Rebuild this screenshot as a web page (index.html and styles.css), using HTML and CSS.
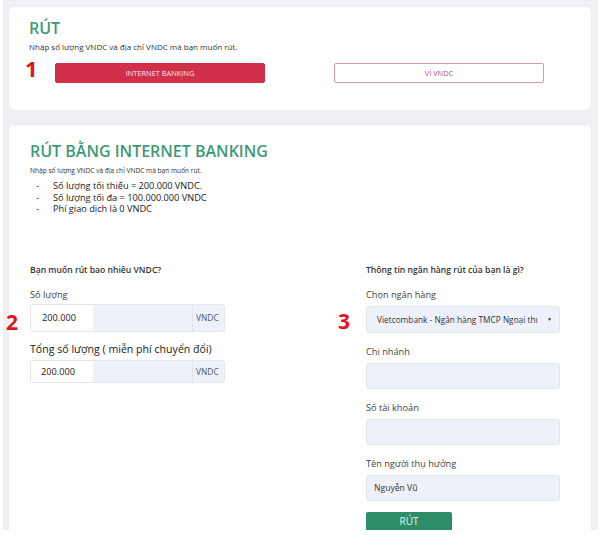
FILE: index.html
```html
<!DOCTYPE html>
<html lang="vi">
<head>
    <meta charset="UTF-8">
    <meta name="viewport" content="width=device-width, initial-scale=1.0">
    <title>Rút VNDC</title>
    <link rel="stylesheet" href="styles.css">
</head>
<body>
    <div class="page">
        <section class="card card-top">
            <h1 class="title">RÚT</h1>
            <p class="lead">Nhập số lượng VNDC và địa chỉ VNDC mà bạn muốn rút.</p>
            <div class="tabs">
                <button class="tab tab-active">INTERNET BANKING</button>
                <button class="tab">VÍ VNDC</button>
            </div>
        </section>

        <section class="card card-form">
            <h2 class="title">RÚT BẰNG INTERNET BANKING</h2>
            <p class="lead lead-small">Nhập số lượng VNDC và địa chỉ VNDC mà bạn muốn rút.</p>
            <ul class="rules">
                <li>Số lượng tối thiểu = 200.000 VNDC.</li>
                <li>Số lượng tối đa = 100.000.000 VNDC</li>
                <li>Phí giao dịch là 0 VNDC</li>
            </ul>

            <div class="columns">
                <div class="col">
                    <h3 class="col-title">Bạn muốn rút bao nhiêu VNDC?</h3>
                    <div class="field-label">Số lượng</div>
                    <div class="input-group">
                        <span class="input-value">200.000</span>
                        <span class="input-fill"></span>
                        <span class="addon">VNDC</span>
                    </div>
                    <div class="field-label field-label-big">Tổng số lượng ( miễn phí chuyển đổi)</div>
                    <div class="input-group input-group-small">
                        <span class="input-value">200.000</span>
                        <span class="input-fill"></span>
                        <span class="addon">VNDC</span>
                    </div>
                </div>

                <div class="col">
                    <h3 class="col-title">Thông tin ngân hàng rút của bạn là gì?</h3>
                    <div class="field-label">Chọn ngân hàng</div>
                    <div class="select">
                        <span>Vietcombank - Ngân hàng TMCP Ngoại thı</span>
                        <span class="caret">▼</span>
                    </div>
                    <div class="field-label">Chi nhánh</div>
                    <div class="text-input"></div>
                    <div class="field-label">Số tài khoản</div>
                    <div class="text-input"></div>
                    <div class="field-label">Tên người thụ hưởng</div>
                    <div class="text-input">Nguyễn Vũ</div>
                    <button class="submit">RÚT</button>
                </div>
            </div>
        </section>

        <span class="mark mark-1">1</span>
        <span class="mark mark-2">2</span>
        <span class="mark mark-3">3</span>
    </div>
</body>
</html>
```

FILE: styles.css
```css
body {
    margin: 0;
    background: #fff;
    font-family: "Open Sans", Arial, sans-serif;
    color: #333;
}
.page {
    position: relative;
    margin-left: 3px;
    width: 595px;
    height: 530px;
    overflow: hidden;
    background: #eff0f4;
    padding: 7px 0 0 6px;
    box-sizing: border-box;
}
.card {
    width: 582px;
    background: #fff;
    border-radius: 5px;
    box-shadow: 0 0 2px rgba(0, 0, 0, 0.06);
    box-sizing: border-box;
}
.card-top {
    height: 103px;
    padding: 13px 20px 0 20px;
}
.card-form {
    margin-top: 15px;
    height: 420px;
    padding: 18px 21px 0 21px;
}
.title {
    margin: 0;
    font-size: 16px;
    line-height: 16px;
    font-weight: 600;
    color: #3d9a77;
}
.lead {
    margin: 5px 0 0;
    font-size: 8px;
    line-height: 12px;
}
.lead-small {
    margin-top: 7px;
    font-size: 6.6px;
    line-height: 10px;
}
.tabs {
    display: flex;
    gap: 69px;
    margin: 10px 0 0 26px;
}
.tab {
    width: 210px;
    height: 20px;
    padding: 0;
    border: 1px solid #d99aab;
    border-radius: 2px;
    background: #fff;
    color: #b8557a;
    font-family: inherit;
    font-size: 7.4px;
}
.tab-active {
    background: #d03049;
    border-color: #d03049;
    color: #fbe3e8;
}
.rules {
    list-style: none;
    margin: 4px 0 0;
    padding: 0 0 0 6px;
    font-size: 9.2px;
    line-height: 11.6px;
    color: #222;
}
.rules li {
    display: flex;
}
.rules li::before {
    content: "-";
    width: 17px;
}
.columns {
    display: grid;
    grid-template-columns: 195px 194px;
    column-gap: 141px;
    margin-top: 49px;
}
.col-title {
    margin: 0;
    font-size: 8.6px;
    line-height: 12px;
    font-weight: 600;
    color: #333;
}
.field-label {
    margin-top: 13px;
    font-size: 9.2px;
    line-height: 12px;
    color: #444;
}
.field-label-big {
    margin-top: 10px;
    font-size: 10.6px;
    line-height: 14px;
    color: #222;
}
.input-group {
    display: flex;
    height: 28px;
    margin-top: 3px;
    border: 1px solid #e2e7ef;
    border-radius: 3px;
    background: #eef1fa;
    box-sizing: border-box;
    font-size: 9.2px;
    color: #222;
}
.input-group-small {
    height: 23px;
    margin-top: 4px;
}
.input-value {
    display: flex;
    align-items: center;
    width: 62px;
    padding-left: 11px;
    background: #fff;
    box-sizing: border-box;
}
.input-group-small .input-value {
    padding-left: 10px;
}
.input-fill {
    flex: 1;
}
.addon {
    display: flex;
    align-items: center;
    width: 32px;
    padding-left: 3px;
    box-sizing: border-box;
    border-left: 1px solid #dfe4ec;
    font-size: 8.4px;
    color: #555;
}
.select,
.text-input {
    display: flex;
    align-items: center;
    height: 27px;
    margin-top: 5px;
    padding: 0 7px 0 7px;
    border: 1px solid #e2e7ef;
    border-radius: 3px;
    background: #eef1fa;
    box-sizing: border-box;
    font-size: 8.6px;
    color: #333;
}
.select {
    justify-content: space-between;
    padding-left: 10px;
    font-size: 8.3px;
}
.caret {
    font-size: 5px;
    color: #333;
}
.text-input {
    height: 26px;
}
.submit {
    display: flex;
    justify-content: center;
    align-items: flex-start;
    width: 86px;
    height: 28px;
    margin-top: 11px;
    padding: 3px 0 0;
    border: none;
    border-radius: 2px;
    background: #2c8d67;
    color: #e6f4ee;
    font-family: inherit;
    font-size: 10px;
    line-height: 12px;
}
.mark {
    position: absolute;
    font-size: 22px;
    line-height: 22px;
    font-weight: 700;
    color: #e3131b;
}
.mark-1 {
    left: 22px;
    top: 57px;
}
.mark-2 {
    left: 3px;
    top: 311px;
    font-size: 21px;
}
.mark-3 {
    left: 335px;
    top: 310px;
    font-size: 21px;
}
```
